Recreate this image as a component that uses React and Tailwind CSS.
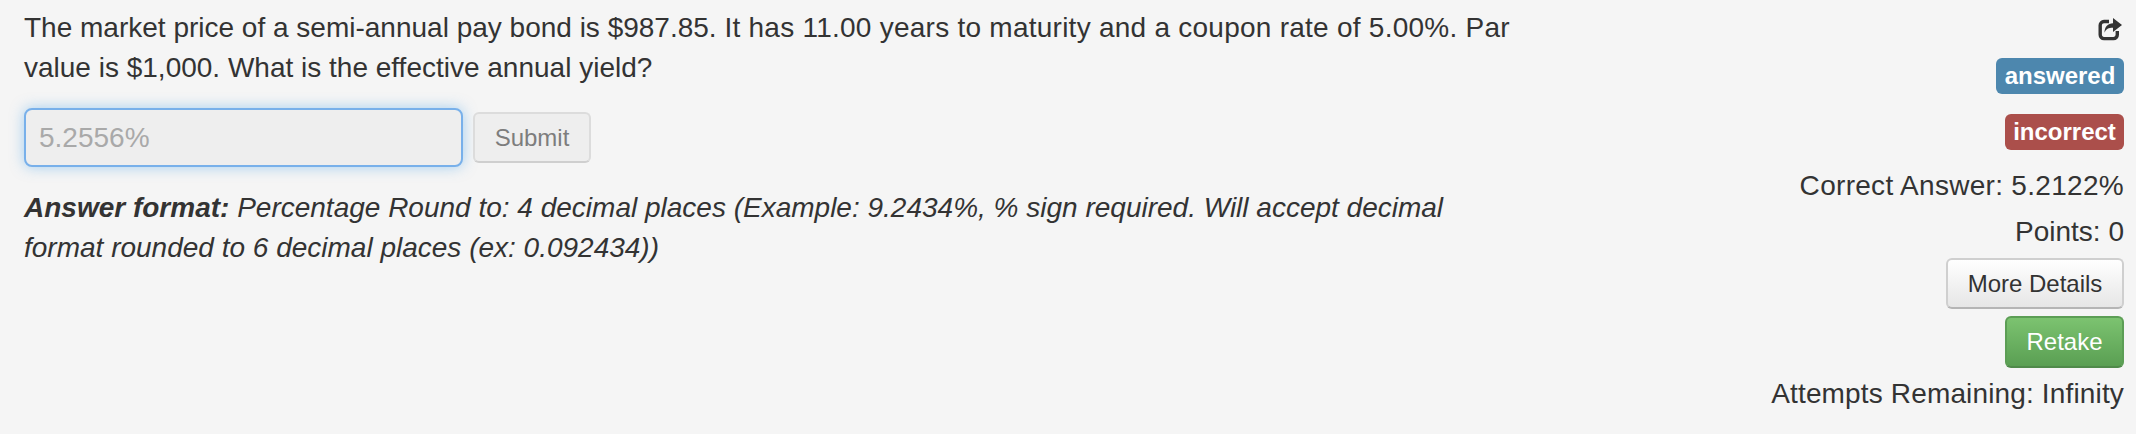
import React from "react";

export default function App() {
  return (
    <div className="w-[2136px] h-[434px] bg-[#f5f5f5] text-[#333333] font-['Liberation_Sans',Arial,sans-serif] text-[28px] leading-[40px] flex justify-between pl-[24px] pr-[12px] pt-[8px] overflow-hidden">
      <div className="w-[1490px]">
        <p>The market price of a semi-annual pay bond is $987.85. <span className="tracking-[0.25px]">It has 11.00 years to maturity and a coupon rate of 5.00%. Par</span> value is $1,000. What is the effective annual yield?</p>
        <div className="flex items-center gap-[10px] mt-[20px]">
          <input
            readOnly
            value="5.2556%"
            className="w-[439px] h-[59px] px-[13px] rounded-[8px] border-2 border-[#78b0ea] bg-[#eeeeee] text-[#a9a9a9] text-[28px] outline-none shadow-[0_0_14px_rgba(82,168,236,0.5)]"
          />
          <button className="w-[118px] h-[51px] rounded-[6px] border-2 border-[#dcdcdc] border-b-[#cfcfcf] bg-[#eeeeee] text-[#7d7d7d] text-[24px] leading-none">Submit</button>
        </div>
        <p className="italic mt-[21px]"><strong className="font-bold">Answer format:</strong> Percentage Round to: 4 decimal places (Example: 9.2434%, % sign required. Will accept decimal format rounded to 6 decimal places (ex: 0.092434))</p>
      </div>
      <div className="flex flex-col items-end">
        <svg viewBox="0 0 24 24" className="w-[24px] h-[24px] mt-[9px] mr-[2px] text-[#333333]" fill="none">
          <path d="M11 4.500H6A3.800 3.800 0 0 0 2.200 8.300v9.500A3.800 3.800 0 0 0 6 21.600h9.500a3.800 3.800 0 0 0 3.800-3.800V14" stroke="currentColor" strokeWidth="3.400" />
          <path d="M15 1l9 7-9 7v-4.200c-4.500 0-7 1-8.500 5 0-6 3.500-9.500 8.500-9.500z" fill="currentColor" />
        </svg>
        <span className="mt-[17px] h-[36px] w-[128px] rounded-[6px] bg-[#4d87ae] text-white font-bold text-[24px] leading-[36px] text-center">answered</span>
        <span className="mt-[20px] h-[36px] w-[119px] rounded-[6px] bg-[#ab4f4b] text-white font-bold text-[24px] leading-[36px] text-center">incorrect</span>
        <div className="mt-[16px] tracking-[0.3px]">Correct Answer: 5.2122%</div>
        <div className="mt-[6px]">Points: 0</div>
        <button className="mt-[6px] w-[178px] h-[51px] rounded-[6px] border-2 border-[#cfcfcf] border-b-[#b5b5b5] bg-gradient-to-b from-white to-[#e6e6e6] text-[#333333] text-[24px] leading-none">More Details</button>
        <button className="mt-[7px] w-[119px] h-[52px] rounded-[6px] border-2 border-[#5c9e55] border-b-[#4f8a4a] bg-gradient-to-b from-[#7cc370] to-[#5a9f53] text-white text-[24px] leading-none">Retake</button>
        <div className="mt-[6px] tracking-[0.15px]">Attempts Remaining: Infinity</div>
      </div>
    </div>
  );
}
